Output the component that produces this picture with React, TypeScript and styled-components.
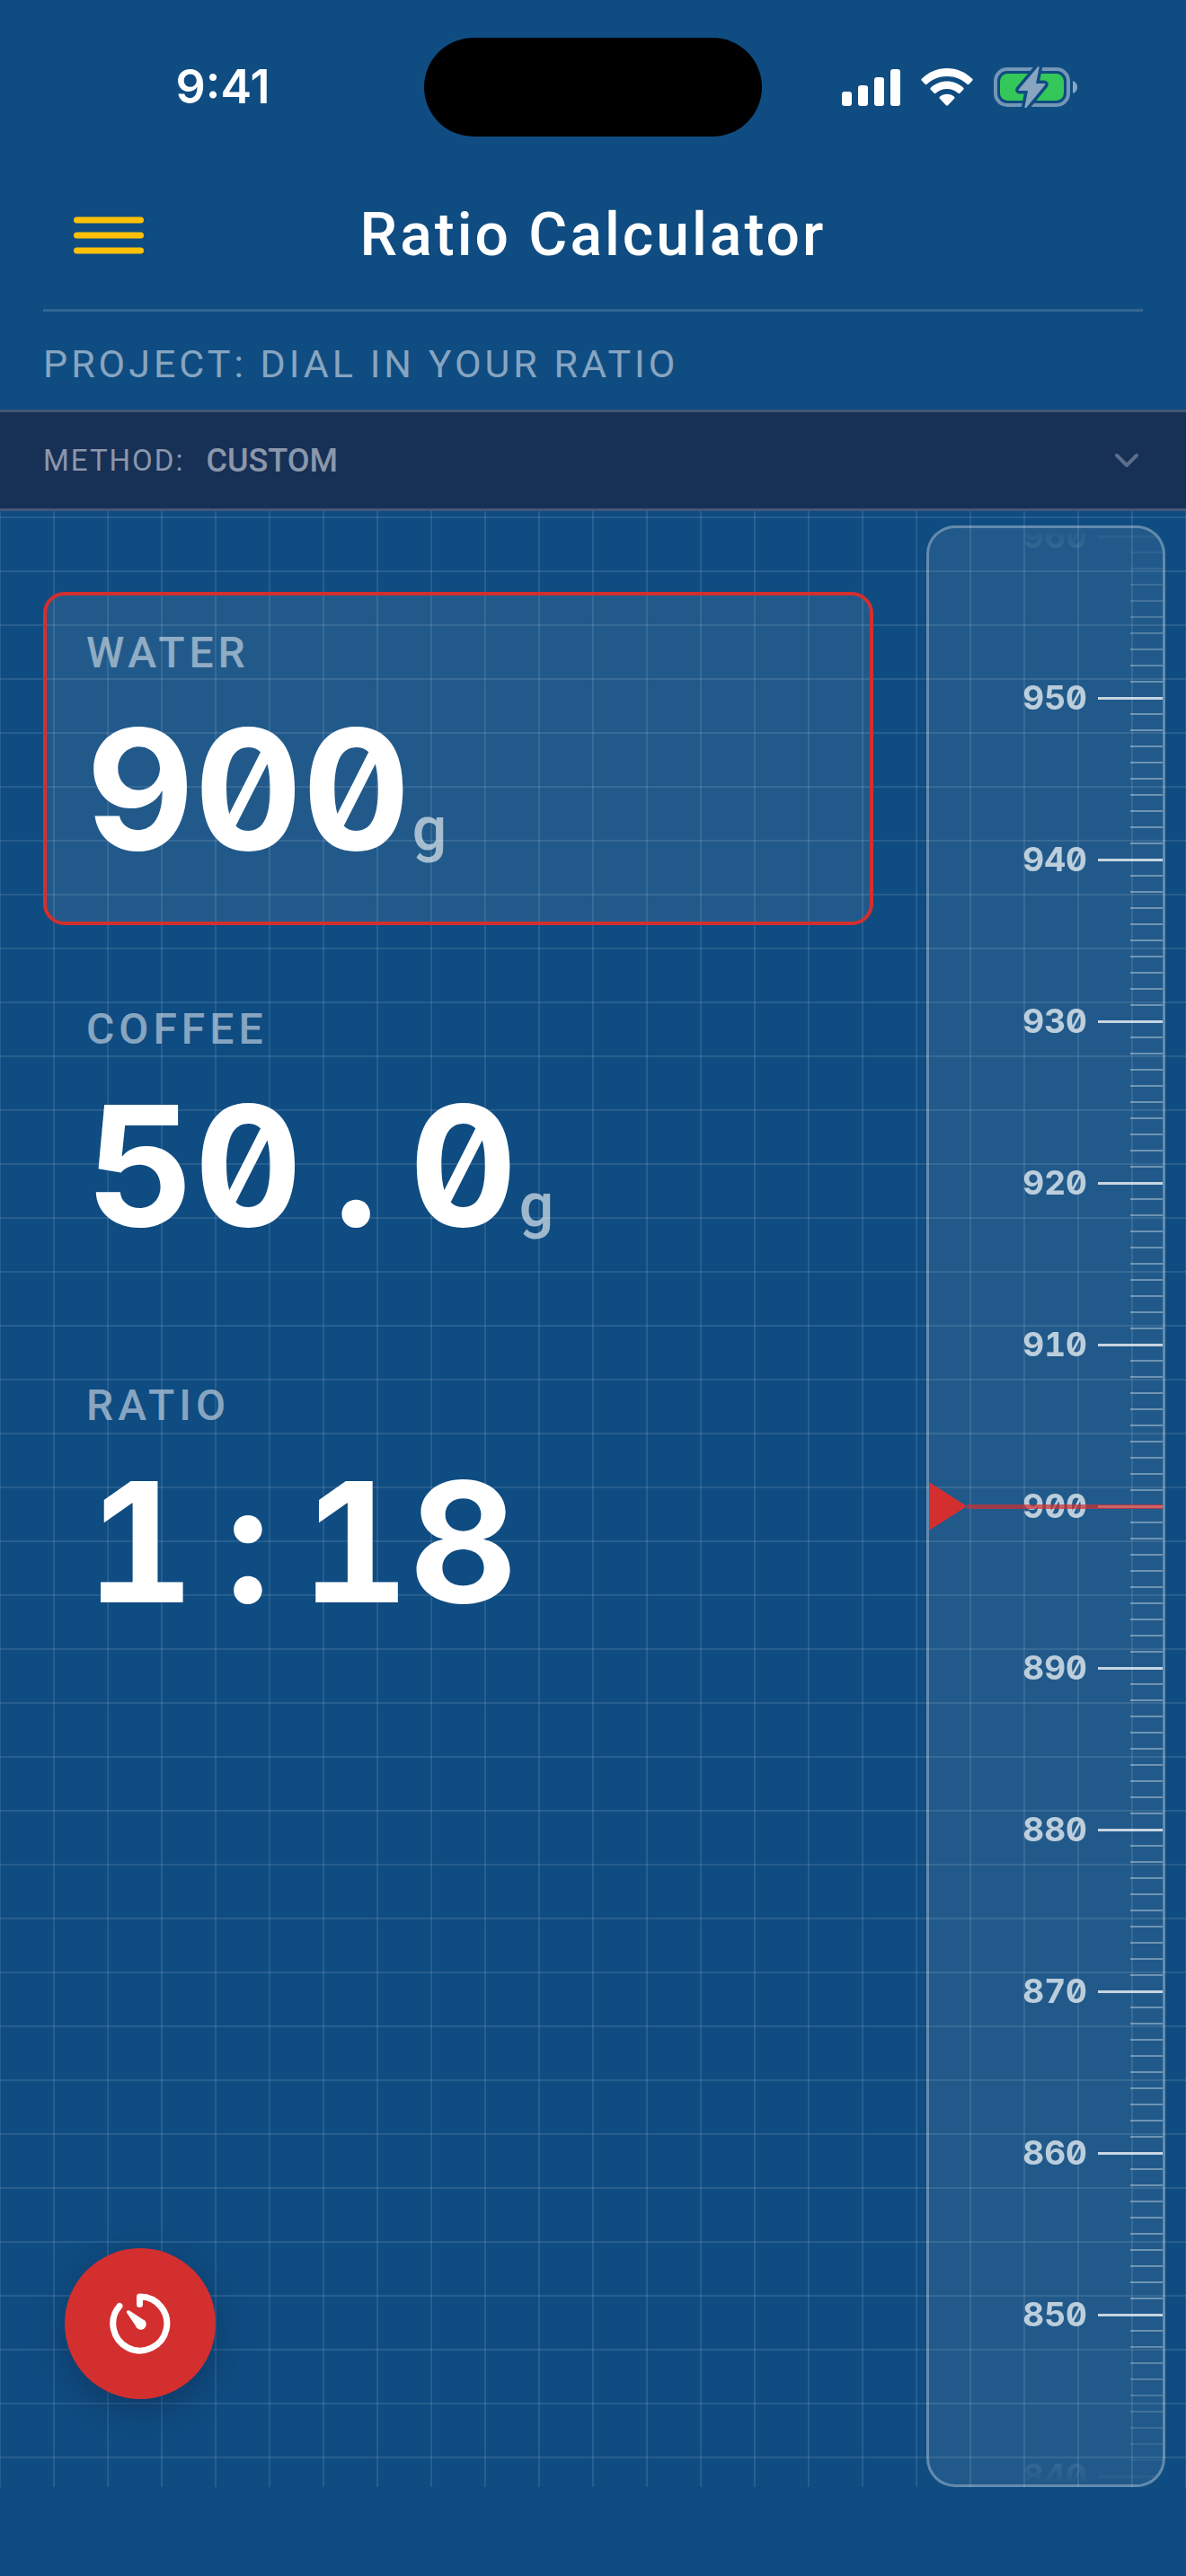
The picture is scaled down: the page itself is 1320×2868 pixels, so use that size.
import React, { useState } from 'react';
import styled, { createGlobalStyle } from 'styled-components';

const sans = "Roboto, 'Liberation Sans', sans-serif";
const digits = "Inter, 'Liberation Sans', sans-serif";
const blue = '#0f4c81';
const red = '#d32f2f';

const GlobalStyle = createGlobalStyle`
  *, *::before, *::after { box-sizing: border-box; }
  body { margin: 0; background: ${blue}; }
  button, select { margin: 0; padding: 0; border: 0; background: none; color: inherit; font: inherit; cursor: pointer; }
`;

const Page = styled.div`
  display: flex;
  flex-direction: column;
  min-height: 100vh;
  padding-bottom: 99px;
  background: ${blue};
  color: #fff;
  font-family: ${sans};
`;

const StatusBar = styled.div`
  display: grid;
  grid-template-columns: 1fr 376px 1fr;
  align-items: center;
  padding: 42px 0 28px;
`;

const Time = styled.time`
  padding-left: 24px;
  text-align: center;
  font: 600 52px/64px ${digits};
`;

const Island = styled.div`
  height: 110px;
  border-radius: 55px;
  background: #000;
`;

const StatusIcons = styled.div`
  display: flex;
  align-items: center;
  justify-content: center;
  gap: 23px;
  padding-right: 32px;
`;

const Header = styled.header`
  display: grid;
  grid-template-columns: 1fr auto 1fr;
  align-items: center;
  height: 167px;
  margin: 0 48px;
  border-bottom: 3px solid rgba(255, 255, 255, 0.15);
`;

const MenuButton = styled.button`
  display: flex;
  justify-self: start;
  padding: 24px 34px;
`;

const Title = styled.h1`
  margin: 0;
  font-size: 66px;
  font-weight: 500;
  line-height: 80px;
  letter-spacing: 3px;
`;

const Project = styled.p`
  margin: 0;
  padding: 34px 48px 27px;
  color: rgba(255, 255, 255, 0.5);
  font-size: 43px;
  line-height: 48px;
  letter-spacing: 4px;
`;

const MethodBar = styled.div`
  display: flex;
  align-items: center;
  gap: 24px;
  height: 113px;
  padding: 0 48px;
  border: solid #455777;
  border-width: 3px 0;
  background: #173056;
  color: rgba(255, 255, 255, 0.5);
`;

const MethodLabel = styled.label`
  font-size: 33px;
  line-height: 48px;
  letter-spacing: 2px;
`;

const MethodPicker = styled.div`
  display: grid;
  flex: 1;
  align-items: center;

  > * { grid-area: 1 / 1; }
  > svg { justify-self: end; margin-right: 4px; pointer-events: none; }
`;

const MethodSelect = styled.select`
  width: 100%;
  appearance: none;
  font-size: 36px;
  font-weight: 500;
  line-height: 48px;

  option { color: #173056; }
`;

const Workspace = styled.main`
  display: flex;
  flex: 1;
  justify-content: space-between;
  padding: 16px 23px 0 48px;
  background-image:
    linear-gradient(rgba(255, 255, 255, 0.1) 2px, transparent 2px),
    linear-gradient(90deg, rgba(255, 255, 255, 0.1) 2px, transparent 2px);
  background-size: 60px 60px;
  background-position: 0 6px, -1px 0;
`;

const Column = styled.div`
  display: flex;
  flex: 1;
  flex-direction: column;
  gap: 48px;
  margin-right: 59px;
  padding: 74px 0 98px;
`;

const Reading = styled.button<{ $active: boolean }>`
  display: flex;
  flex-direction: column;
  gap: 20px;
  padding: 36px 44px 43px;
  border: 4px solid ${(p) => (p.$active ? red : 'transparent')};
  border-radius: 24px;
  background: ${(p) => (p.$active ? 'rgba(255, 255, 255, 0.08)' : 'none')};
  text-align: left;
`;

const ReadingLabel = styled.span`
  color: rgba(255, 255, 255, 0.5);
  font-size: 48px;
  font-weight: 500;
  line-height: 56px;
  letter-spacing: 5px;
`;

const ReadingValue = styled.span`
  display: flex;
  align-items: baseline;
  font: 700 186px/208px ${digits};
  font-feature-settings: 'tnum', 'zero';
`;

/* Gives the point and the colon the same cell width as a digit. */
const Separator = styled.span`
  width: 119px;
  text-align: center;
`;

const Unit = styled.span`
  margin-left: 2px;
  color: rgba(255, 255, 255, 0.6);
  font: 500 68px/80px ${sans};
`;

const TimerButton = styled.button`
  display: flex;
  align-items: center;
  justify-content: center;
  width: 168px;
  height: 168px;
  margin: auto 0 0 24px;
  border-radius: 50%;
  background: ${red};
  box-shadow: 0 12px 36px rgba(16, 32, 64, 0.4);
`;

const Ruler = styled.div`
  position: relative;
  display: flex;
  flex-direction: column;
  justify-content: center;
  width: 266px;
  overflow: hidden;
  border: 3px solid rgba(255, 255, 255, 0.3);
  border-radius: 32px;
  background: rgba(255, 255, 255, 0.08);
`;

const Scale = styled.div`
  mask-image: linear-gradient(transparent, #000 180px, #000 calc(100% - 180px), transparent);
`;

const Tick = styled.div`
  display: flex;
  align-items: center;
  justify-content: flex-end;
  gap: 12px;
  height: 18px;
  color: rgba(255, 255, 255, 0.7);
  font: 700 37px/18px ${digits};
  font-feature-settings: 'tnum', 'zero';
`;

const TickLine = styled.span<{ $major: boolean }>`
  width: ${(p) => (p.$major ? 72 : 36)}px;
  height: ${(p) => (p.$major ? 3 : 2)}px;
  background: rgba(255, 255, 255, ${(p) => (p.$major ? 0.75 : 0.35)});
`;

const Needle = styled.div`
  position: absolute;
  inset: 0;
  display: flex;
  align-items: center;
  pointer-events: none;

  &::after {
    content: '';
    flex: 1;
    height: 5px;
    background: ${red};
    opacity: 0.7;
  }
`;

const Dial = styled.input`
  position: absolute;
  inset: 0;
  width: 100%;
  height: 100%;
  margin: 0;
  opacity: 0;
  writing-mode: vertical-lr;
  direction: rtl;
  cursor: ns-resize;
`;

const SignalIcon = () => (
  <svg width="65" height="42" viewBox="0 0 65 42" fill="#fff" aria-hidden="true">
    <rect x="0" y="26" width="11" height="16" rx="3" />
    <rect x="18" y="19" width="11" height="23" rx="3" />
    <rect x="36" y="10" width="11" height="32" rx="3" />
    <rect x="54" y="1" width="11" height="41" rx="3" />
  </svg>
);

const WifiIcon = () => (
  <svg width="58" height="42" viewBox="0 0 58 42" fill="#fff" aria-hidden="true">
    <path d="M29 0C18 0 8 4.500 .8 11.800c-.6.600-.6 1.400 0 2l3.800 4c.6.600 1.400.600 2 0C12.600 12 20.500 9 29 9s16.400 3 22.400 8.800c.6.600 1.400.600 2 0l3.800-4c.6-.6.600-1.400 0-2C50 4.500 40 0 29 0z" />
    <path d="M29 14.500c-7 0-13.400 2.700-18.200 7.200-.6.600-.6 1.400 0 2l3.900 4c.5.600 1.300.600 1.900.1 3.300-3 7.700-4.800 12.400-4.800s9.100 1.800 12.400 4.800c.6.500 1.400.500 1.900-.1l3.900-4c.6-.6.600-1.400 0-2C42.400 17.200 36 14.500 29 14.500z" />
    <path d="M29 28.800c-3.100 0-6 1.100-8.100 3-.6.500-.6 1.300 0 1.900l7.100 7.500c.6.600 1.400.600 2 0l7.100-7.500c.6-.6.600-1.400 0-1.900-2.100-1.900-5-3-8.100-3z" />
  </svg>
);

const BatteryIcon = () => (
  <svg width="93" height="46" viewBox="0 0 93 46" aria-hidden="true">
    <rect x="2" y="3" width="81" height="40" rx="13" fill="none" stroke="#7496b7" strokeWidth="4" />
    <path d="M88 16c3 .8 5 3.600 5 7s-2 6.200-5 7z" fill="#87a5c0" />
    <rect x="7" y="8" width="71" height="30" rx="8.500" fill="#34c759" />
    <path
      d="M49 .5 28 25.200c-.7.800-.2 1.800.9 1.800H38l-3.600 18.200c-.2 1.200 1.300 1.500 2 .6L57 20.800c.7-.8.200-1.800-.9-1.800H47L50.600 1.200C50.800 0 49.700-.3 49 .5z"
      fill="#87a5c0"
      stroke={blue}
      strokeWidth="7"
      strokeLinejoin="round"
      paintOrder="stroke"
    />
  </svg>
);

const MenuIcon = () => (
  <svg width="78" height="42" viewBox="0 0 78 42" stroke="#ffc107" strokeWidth="7" strokeLinecap="round" aria-hidden="true">
    <path d="M3.500 4h71M3.500 21h71M3.500 38h71" />
  </svg>
);

const ChevronIcon = () => (
  <svg width="28" height="18" viewBox="0 0 28 18" fill="none" stroke="#5d6e8b" strokeWidth="4" strokeLinecap="round" strokeLinejoin="round" aria-hidden="true">
    <path d="M3 3l11 11L25 3" />
  </svg>
);

const TimerIcon = () => (
  <svg width="68" height="68" viewBox="0 0 68 68" aria-hidden="true">
    <path d="M33.500 12.500V4A30 30 0 1 1 11 14.500" fill="none" stroke="#fff" strokeWidth="7" strokeLinecap="round" strokeLinejoin="round" />
    <path d="M22 19.500l14.500 9.500a6 6 0 1 1-7.500 7.500L19.300 22.300c-1.200-1.900.8-4 2.700-2.800z" fill="#fff" />
  </svg>
);

const PointerIcon = () => (
  <svg width="42" height="54" viewBox="0 0 42 54" fill={red} aria-hidden="true">
    <path d="M0 0l42 27L0 54z" />
  </svg>
);

const RATIO = 18;
const offsets = Array.from({ length: 121 }, (_, i) => 60 - i);

const Figures = ({ text }: { text: string }) => (
  <>
    {text.split(/([.:])/).map((part, i) =>
      i % 2 ? <Separator key={i}>{part}</Separator> : <span key={i}>{part}</span>,
    )}
  </>
);

export default function App() {
  const [water, setWater] = useState(900);
  const [active, setActive] = useState('WATER');

  const readings = [
    { label: 'WATER', value: String(water), unit: 'g' },
    { label: 'COFFEE', value: (water / RATIO).toFixed(1), unit: 'g' },
    { label: 'RATIO', value: `1:${RATIO}`, unit: '' },
  ];

  return (
    <Page>
      <GlobalStyle />
      <StatusBar>
        <Time>9:41</Time>
        <Island />
        <StatusIcons>
          <SignalIcon />
          <WifiIcon />
          <BatteryIcon />
        </StatusIcons>
      </StatusBar>

      <Header>
        <MenuButton type="button" aria-label="Menu">
          <MenuIcon />
        </MenuButton>
        <Title>Ratio Calculator</Title>
      </Header>

      <Project>PROJECT: DIAL IN YOUR RATIO</Project>

      <MethodBar>
        <MethodLabel htmlFor="method">METHOD:</MethodLabel>
        <MethodPicker>
          <MethodSelect id="method" defaultValue="custom">
            <option value="custom">CUSTOM</option>
          </MethodSelect>
          <ChevronIcon />
        </MethodPicker>
      </MethodBar>

      <Workspace>
        <Column>
          {readings.map((r) => (
            <Reading key={r.label} type="button" $active={active === r.label} aria-pressed={active === r.label} onClick={() => setActive(r.label)}>
              <ReadingLabel>{r.label}</ReadingLabel>
              <ReadingValue>
                <Figures text={r.value} />
                {r.unit && <Unit>{r.unit}</Unit>}
              </ReadingValue>
            </Reading>
          ))}
          <TimerButton type="button" aria-label="Start timer">
            <TimerIcon />
          </TimerButton>
        </Column>

        <Ruler>
          <Scale>
            {offsets.map((offset) => {
              const mark = water + offset;
              const major = mark % 10 === 0;
              return (
                <Tick key={offset}>
                  {major && mark}
                  <TickLine $major={major} />
                </Tick>
              );
            })}
          </Scale>
          <Needle>
            <PointerIcon />
          </Needle>
          <Dial type="range" aria-label="Water in grams" min={100} max={2000} value={water} onChange={(e) => setWater(Number(e.target.value))} />
        </Ruler>
      </Workspace>
    </Page>
  );
}
